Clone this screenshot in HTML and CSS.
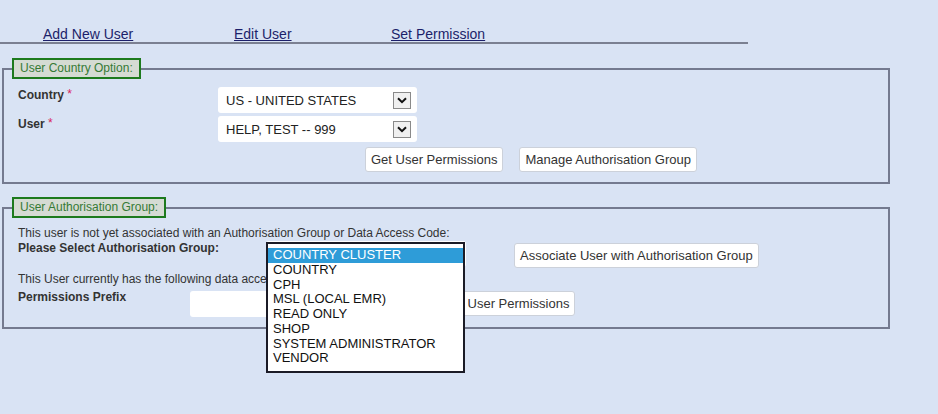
FILE: index.html
```html
<!DOCTYPE html>
<html lang="en">
<head>
<meta charset="utf-8">
<title>User Permissions</title>
<link rel="stylesheet" href="styles.css">
</head>
<body>
<nav class="tabs">
  <a href="#" class="tab tab-add">Add New User</a>
  <a href="#" class="tab tab-edit">Edit User</a>
  <a href="#" class="tab">Set Permission</a>
</nav>

<fieldset class="panel panel-country">
  <legend class="panel-legend">User Country Option:</legend>
  <div class="panel-body">
    <div class="form-grid">
      <div class="field-label">Country <span class="req">*</span></div>
      <div class="select">
        <span class="select-value">US - UNITED STATES</span>
        <span class="select-arrow"><svg width="10" height="7" viewBox="0 0 10 7"><path d="M1 1.2 L5 5.2 L9 1.2" fill="none" stroke="#111" stroke-width="2"/></svg></span>
      </div>
      <div class="field-label">User <span class="req">*</span></div>
      <div class="select">
        <span class="select-value">HELP, TEST -- 999</span>
        <span class="select-arrow"><svg width="10" height="7" viewBox="0 0 10 7"><path d="M1 1.2 L5 5.2 L9 1.2" fill="none" stroke="#111" stroke-width="2"/></svg></span>
      </div>
    </div>
    <div class="actions">
      <button class="btn">Get User Permissions</button>
      <button class="btn">Manage Authorisation Group</button>
    </div>
  </div>
</fieldset>

<fieldset class="panel panel-group">
  <legend class="panel-legend">User Authorisation Group:</legend>
  <div class="panel-body">
    <p class="note">This user is not yet associated with an Authorisation Group or Data Access Code:</p>
    <div class="row row-select">
      <div class="field-label label-wide">Please Select Authorisation Group:</div>
      <div class="select select-closed"></div>
      <button class="btn btn-associate">Associate User with Authorisation Group</button>
    </div>
    <p class="note note-gap">This User currently has the following data access codes:</p>
    <div class="row row-prefix">
      <div class="field-label label-prefix">Permissions Prefix</div>
      <input class="text-input" type="text">
      <button class="btn btn-get">Get User Permissions</button>
    </div>
  </div>
</fieldset>

<ul class="listbox">
  <li class="option selected">COUNTRY CLUSTER</li>
  <li class="option">COUNTRY</li>
  <li class="option">CPH</li>
  <li class="option">MSL (LOCAL EMR)</li>
  <li class="option">READ ONLY</li>
  <li class="option">SHOP</li>
  <li class="option">SYSTEM ADMINISTRATOR</li>
  <li class="option">VENDOR</li>
</ul>
</body>
</html>
```
FILE: styles.css
```css
html, body {
  margin: 0;
  padding: 0;
}
body {
  background: #d9e3f4;
  font-family: "Liberation Sans", Arial, sans-serif;
  color: #333;
  font-size: 12px;
  width: 938px;
  height: 414px;
  overflow: hidden;
  position: relative;
}

/* top navigation */
.tabs {
  width: 748px;
  display: grid;
  grid-template-columns: 191px 157px auto;
  padding: 26px 0 0 43px;
  box-sizing: border-box;
  border-bottom: 2px solid #7b8091;
  font-size: 14px;
  line-height: 16px;
}
.tab {
  color: #1c1f6a;
  text-decoration: underline;
  justify-self: start;
}

/* fieldsets */
.panel {
  margin: 14px 0 0 2px;
  width: 888px;
  box-sizing: border-box;
  border: 2px solid #747a8f;
  padding: 0 8px 10px 8px;
  min-width: 0;
}
.panel-group {
  margin-top: 13px;
}
.panel-legend {
  border: 2px solid #1d7a1d;
  background: #d5dbd3;
  color: #357a35;
  font-size: 12px;
  line-height: 17px;
  padding: 0 6px;
  margin: 0;
}
.panel-body {
  padding: 8px 0 0 6px;
}

.form-grid {
  display: grid;
  grid-template-columns: 200px 199px;
  grid-auto-rows: 26px;
  row-gap: 3px;
}
.field-label {
  font-weight: bold;
  font-size: 12px;
  line-height: 14px;
  color: #333;
}
.req {
  color: #d8245c;
  font-weight: normal;
  font-size: 12px;
  vertical-align: 1px;
}

.select {
  background: #fff;
  border-radius: 3px;
  display: flex;
  align-items: center;
  justify-content: space-between;
  padding: 0 6px 0 8px;
  box-sizing: border-box;
  font-size: 13px;
  color: #222;
}
.select-arrow {
  width: 18px;
  height: 17px;
  box-sizing: border-box;
  border: 1px solid #8a8a8a;
  background: #f0f0f0;
  display: flex;
  align-items: center;
  justify-content: center;
}

.actions {
  display: flex;
  gap: 16px;
  margin-top: 5px;
  padding-left: 347px;
}
.btn {
  height: 25px;
  box-sizing: border-box;
  background: #fff;
  border: 1px solid #ccd1da;
  border-radius: 3px;
  font-family: "Liberation Sans", Arial, sans-serif;
  font-size: 13px;
  color: #333;
  padding: 0 5px;
  margin: 0;
}

.note {
  margin: 0;
  line-height: 15px;
  font-size: 12px;
}
.note-gap {
  margin-top: 4px;
}
.row {
  display: flex;
  align-items: flex-start;
}
.row-select .field-label {
  line-height: 15px;
  width: 248px;
  flex: none;
}
.select-closed {
  width: 200px;
  height: 26px;
  flex: none;
}
.btn-associate {
  margin: 2px 0 0 48px;
}
.row-prefix {
  margin-top: 3px;
}
.label-prefix {
  width: 172px;
  flex: none;
  line-height: 15px;
}
.text-input {
  width: 240px;
  height: 26px;
  box-sizing: border-box;
  border: none;
  border-radius: 3px;
  background: #fff;
  margin: 1px 0 0 0;
  padding: 0;
}
.btn-get {
  margin: 1px 0 0 7px;
}

/* open dropdown list, overlays the form */
.listbox {
  position: absolute;
  left: 266px;
  top: 242px;
  width: 199px;
  height: 131px;
  box-sizing: border-box;
  margin: 0;
  padding: 4px 0 0 0;
  list-style: none;
  background: #fff;
  border: 2px solid #1b1b26;
  font-size: 13px;
  line-height: 14.75px;
  color: #111;
}
.option {
  padding-left: 5px;
  white-space: nowrap;
}
.option.selected {
  background: #2e9cd8;
  color: #fff;
}
```
